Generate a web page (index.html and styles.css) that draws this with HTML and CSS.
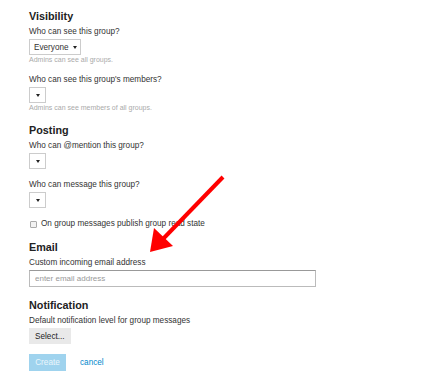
FILE: index.html
```html
<!DOCTYPE html>
<html lang="en">
<head>
  <meta charset="UTF-8">
  <meta name="viewport" content="width=device-width, initial-scale=1.0">
  <title>New Group</title>
  <link rel="stylesheet" href="styles.css">
</head>
<body>
  <form class="group-form">
    <section class="group-section">
      <h3>Visibility</h3>
      <div class="field">
        <label>Who can see this group?</label>
        <div class="combo wide">Everyone <span class="caret"></span></div>
        <div class="help">Admins can see all groups.</div>
      </div>
      <div class="field">
        <label>Who can see this group's members?</label>
        <div class="combo"><span class="caret"></span></div>
        <div class="help">Admins can see members of all groups.</div>
      </div>
    </section>

    <section class="group-section">
      <h3>Posting</h3>
      <div class="field">
        <label>Who can @mention this group?</label>
        <div class="combo"><span class="caret"></span></div>
      </div>
      <div class="field">
        <label>Who can message this group?</label>
        <div class="combo"><span class="caret"></span></div>
      </div>
      <div class="field">
        <label class="check"><input type="checkbox"> On group messages publish group read state</label>
      </div>
    </section>

    <section class="group-section email">
      <h3>Email</h3>
      <div class="field">
        <label>Custom incoming email address</label>
        <input class="text-input" type="text" placeholder="enter email address">
      </div>
    </section>

    <section class="group-section">
      <h3>Notification</h3>
      <div class="field">
        <label>Default notification level for group messages</label>
        <button type="button" class="btn-select">Select...</button>
      </div>
    </section>

    <div class="actions">
      <button type="button" class="btn-create">Create</button>
      <a href="#" class="cancel">cancel</a>
    </div>
  </form>

  <svg class="arrow" width="443" height="375" viewBox="0 0 443 375">
    <line x1="223" y1="177" x2="162" y2="240" stroke="#ff0000" stroke-width="4"/>
    <polygon points="150,252 154,228 173,246" fill="#ff0000"/>
  </svg>
</body>
</html>
```

FILE: styles.css
```css
body {
  margin: 0;
  padding: 9px 0 0 29px;
  font-family: 'Liberation Sans', Arial, sans-serif;
  color: #333;
  background: #fff;
}
.group-form {
  width: 287px;
}
.group-section h3 {
  margin: 0 0 4px;
  font-size: 10.8px;
  line-height: 14px;
  font-weight: bold;
  color: #222;
}
.field {
  margin-bottom: 11px;
}
.group-section.email {
  margin-top: 1px;
}
.field label {
  display: block;
  font-size: 8.2px;
  line-height: 10px;
  margin-bottom: 2px;
  color: #333;
}
.combo {
  width: 17px;
  height: 16px;
  box-sizing: border-box;
  border: 1px solid #ccc;
  display: flex;
  align-items: center;
  justify-content: center;
  font-size: 8.2px;
  color: #333;
}
.combo.wide {
  width: 52px;
  justify-content: space-between;
  padding: 0 3px 0 4px;
}
.caret {
  width: 0;
  height: 0;
  border-left: 2.5px solid transparent;
  border-right: 2.5px solid transparent;
  border-top: 3px solid #222;
}
.help {
  font-size: 7px;
  line-height: 9px;
  color: #aaa;
}
.field label.check {
  display: flex;
  align-items: center;
  gap: 4px;
  margin: 0;
}
.check input {
  appearance: none;
  margin: 0 0 0 1px;
  width: 7px;
  height: 7px;
  border: 1px solid #aaa;
  border-radius: 1px;
  background: #f2f2f2;
  box-sizing: border-box;
}
.text-input {
  display: block;
  width: 287px;
  height: 17px;
  box-sizing: border-box;
  border: 1px solid #bbb;
  border-top-color: #999;
  padding: 0 5px;
  font-family: inherit;
  font-size: 8px;
  margin: 0;
}
.text-input::placeholder {
  color: #999;
}
.btn-select {
  display: block;
  height: 16px;
  padding: 0 6px;
  border: none;
  background: #e9e9e9;
  color: #222;
  font-family: inherit;
  font-size: 8.2px;
  margin: 0;
}
.actions {
  display: flex;
  align-items: center;
  gap: 14px;
  margin-top: -1px;
}
.btn-create {
  height: 17px;
  width: 37px;
  padding: 0;
  border: none;
  background: #9fd3ee;
  color: #eaf6fc;
  font-family: inherit;
  font-size: 8.2px;
}
.cancel {
  color: #0088cc;
  font-size: 8.2px;
  text-decoration: none;
}
.arrow {
  position: absolute;
  left: 0;
  top: 0;
  pointer-events: none;
}
```
